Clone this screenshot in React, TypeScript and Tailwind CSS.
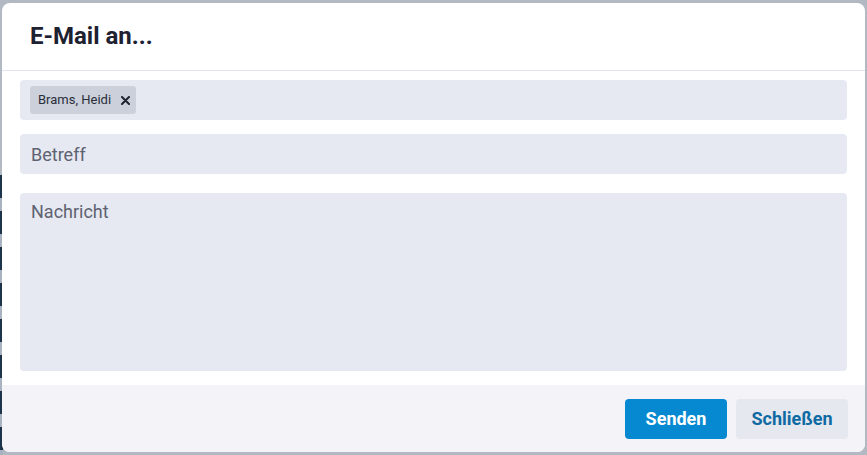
export default function App() {
  const stripes = [0, 1, 2, 3, 4, 5, 6, 7];

  return (
    <div className="relative h-[455px] w-[867px] overflow-hidden bg-[#b3b9c3] font-['Roboto',sans-serif]">
      {/* page behind the overlay */}
      <div className="absolute left-0 top-[175px] flex w-[3px] flex-col">
        {stripes.map((i) => (
          <div key={i} className="flex flex-col">
            <div className="h-[23px] bg-[#1d3349]" />
            <div className="h-[13px] bg-[#a9b2c0]" />
          </div>
        ))}
      </div>
      <div className="absolute right-[2px] top-[318px] h-[6px] w-[1px] bg-[#1786c7]" />

      <div className="absolute left-[2px] top-[3px] flex h-[449px] w-[863px] flex-col overflow-hidden rounded-lg bg-white">
        <div className="h-[68px] shrink-0 border-b border-[#e2e4eb] pl-[28px] pt-[20px]">
          <h1 className="text-[24px] font-bold leading-[26px] text-[#1d2130]">E-Mail an...</h1>
        </div>

        <div className="px-[18px] pt-[9px]">
          <div className="flex h-[40px] items-center rounded bg-[#e6e9f1] px-[10px]">
            <span className="flex h-[28px] items-center gap-[10px] rounded-[3px] bg-[#cbd0da] pl-[8px] pr-[6px] text-[13px] text-[#2a2e3a]">
              Brams, Heidi
              <svg width="9" height="9" viewBox="0 0 9 9" className="text-[#1f2330]">
                <path d="M1 1L8 8M8 1L1 8" stroke="currentColor" strokeWidth="2" strokeLinecap="round" />
              </svg>
            </span>
          </div>

          <div className="mt-[14px] flex h-[40px] items-center rounded bg-[#e6e9f1] px-[11px] text-[18px] text-[#5e6271]">
            Betreff
          </div>

          <div className="mt-[19px] h-[178px] rounded bg-[#e6e9f1] px-[11px] pt-[7px] text-[18px] leading-6 text-[#5e6271]">
            Nachricht
          </div>
        </div>

        <div className="mt-[14px] flex flex-1 items-center justify-end gap-[9px] bg-[#f4f3f8] pr-[17px]">
          <button className="h-[40px] w-[102px] rounded bg-[#0789d2] text-[18px] font-bold text-white">
            Senden
          </button>
          <button className="h-[40px] w-[112px] rounded bg-[#e5e8ef] text-[18px] font-bold text-[#0f6aa3]">
            Schließen
          </button>
        </div>
      </div>
    </div>
  );
}
